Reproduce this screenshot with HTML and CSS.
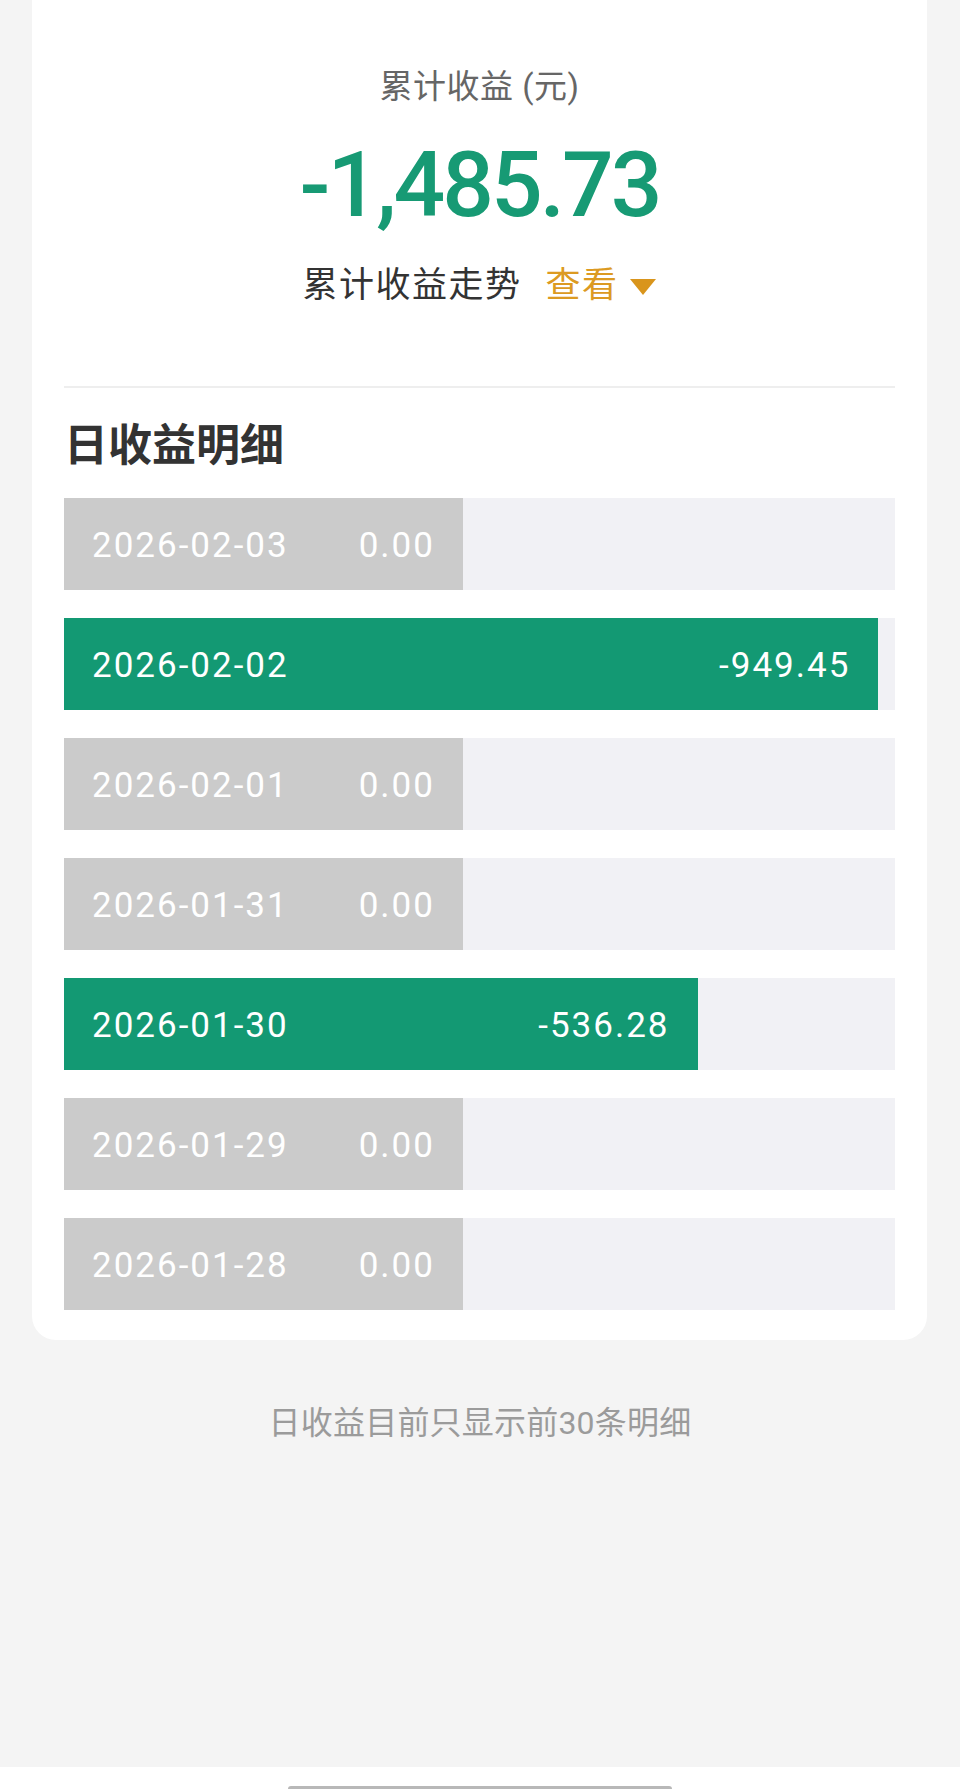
FILE: index.html
```html
<!DOCTYPE html>
<html lang="zh-CN">
<head>
  <meta charset="UTF-8" />
  <meta name="viewport" content="width=device-width, initial-scale=1.0" />
  <title>日收益明细</title>
  <link rel="stylesheet" href="styles.css">
</head>
<body>

  <div class="card">
    <div class="summary">
      <div class="summary-title">累计收益 (元)</div>
      <div class="summary-total">-1,485.73</div>
      <div class="trend">
        <span>累计收益走势</span>
        <a class="trend-link" href="#">查看
          <svg width="28" height="18" viewBox="0 0 28 18"><polygon points="1,1 27,1 14,17" fill="#d9951c"/></svg>
        </a>
      </div>
    </div>

    <h2 class="detail-title">日收益明细</h2>
    <div class="daily-list" id="dailyList"></div>
  </div>

  <p class="note">日收益目前只显示前30条明细</p>

  <div class="home-bar"><span></span></div>

<script>
const daily = [
  { date: '2026-02-03', amount: 0 },
  { date: '2026-02-02', amount: -949.45 },
  { date: '2026-02-01', amount: 0 },
  { date: '2026-01-31', amount: 0 },
  { date: '2026-01-30', amount: -536.28 },
  { date: '2026-01-29', amount: 0 },
  { date: '2026-01-28', amount: 0 }
];

function renderDaily() {
  const list = document.getElementById('dailyList');
  const max = Math.max(...daily.map(d => Math.abs(d.amount)));
  list.innerHTML = '';

  daily.forEach(d => {
    const width = 48 + 50 * Math.abs(d.amount) / max;
    const row = document.createElement('div');
    row.className = 'day-row';
    row.innerHTML = `
      <div class="day-bar ${d.amount === 0 ? 'zero' : 'loss'}" style="width: ${width.toFixed(2)}%">
        <span>${d.date}</span>
        <span>${d.amount.toFixed(2)}</span>
      </div>`;
    list.appendChild(row);
  });
}

renderDaily();
</script>

</body>
</html>
```

FILE: styles.css
```css
* { margin: 0; padding: 0; box-sizing: border-box; }

body {
  font-family: Roboto, "Noto Sans CJK SC", sans-serif;
  background: #f4f4f4;
  color: #333;
  min-height: 1789px;
  display: flex;
  flex-direction: column;
}

.card {
  background: #fff;
  margin: 0 33px 0 32px;
  padding: 0 32px 30px;
  border-radius: 0 0 24px 24px;
}

.summary {
  text-align: center;
  padding-top: 67px;
  border-bottom: 2px solid #eeeeee;
  padding-bottom: 78px;
}

.summary-title {
  font-size: 33px;
  line-height: 40px;
  letter-spacing: 0.5px;
  color: #666;
}

.summary-total {
  margin-top: 28px;
  font-size: 91px;
  line-height: 100px;
  font-weight: 500;
  letter-spacing: -3px;
  color: #179a74;
}

.trend {
  margin-top: 29px;
  display: flex;
  justify-content: center;
  align-items: center;
  gap: 24px;
  font-size: 35px;
  line-height: 44px;
  letter-spacing: 1.5px;
  color: #333;
}

.trend-link {
  display: flex;
  align-items: center;
  gap: 10px;
  color: #dc9a22;
  text-decoration: none;
}

.trend-link svg {
  margin-top: 2px;
}

.detail-title {
  margin-top: 30px;
  font-size: 44px;
  line-height: 56px;
  font-weight: 600;
  color: #333;
}

.daily-list {
  margin-top: 24px;
  display: flex;
  flex-direction: column;
  gap: 28px;
}

.day-row {
  height: 92px;
  background: #f1f1f5;
  display: flex;
}

.day-bar {
  display: flex;
  justify-content: space-between;
  align-items: center;
  padding: 2px 28px 0;
  color: #fff;
  font-size: 35px;
  letter-spacing: 2px;
}

.day-bar.zero { background: #cbcbcb; }
.day-bar.loss { background: #139973; }

.note {
  margin-top: 63px;
  text-align: center;
  font-size: 32px;
  line-height: 40px;
  letter-spacing: 0.2px;
  color: #9b9b9b;
}

.home-bar {
  margin-top: auto;
  height: 22px;
  background: #fff;
  display: flex;
  justify-content: center;
  align-items: flex-end;
}

.home-bar span {
  width: 384px;
  height: 3px;
  background: #b8b8b8;
  border-radius: 3px 3px 0 0;
}
```
